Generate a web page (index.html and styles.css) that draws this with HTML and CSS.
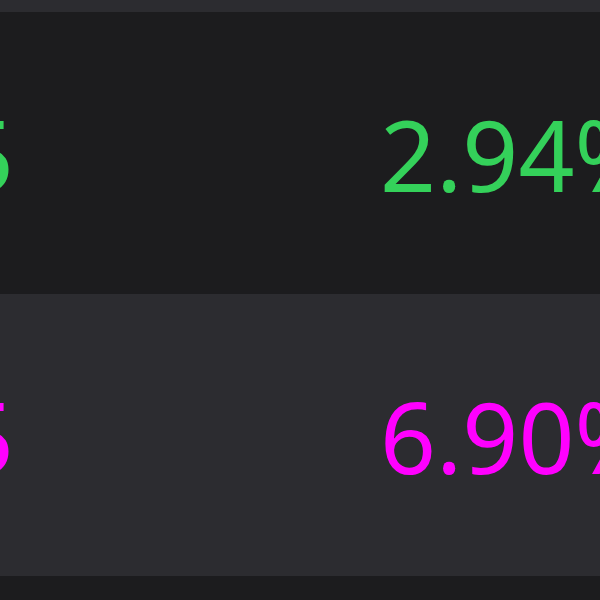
FILE: index.html
```html
<!DOCTYPE html>
<html>
<head>
<meta charset="utf-8">
<link rel="stylesheet" href="styles.css">
</head>
<body>
<div class="table">
  <div class="row alt top"></div>
  <div class="row">
    <div class="cell price up">0.0365</div>
    <div class="cell change up">2.94%</div>
  </div>
  <div class="row alt">
    <div class="cell price down">0.1545</div>
    <div class="cell change down">6.90%</div>
  </div>
  <div class="row"></div>
</div>
</body>
</html>
```
FILE: styles.css
```css
html, body {
  margin: 0;
  padding: 0;
  background: #1c1c1e;
  overflow: hidden;
}
.table {
  width: 600px;
  height: 600px;
  overflow: hidden;
  display: flex;
  flex-direction: column;
  font-family: "Noto Sans", "Open Sans", sans-serif;
}
.row {
  flex: 0 0 282px;
  display: grid;
  grid-template-columns: 14px 1fr;
  column-gap: 366px;
  align-items: center;
  background: #1c1c1e;
  font-size: 98px;
  line-height: 1;
}
.row.alt {
  background: #2c2c30;
}
.row.top {
  flex: 0 0 12px;
}
.cell {
  white-space: nowrap;
  padding-top: 2px;
}
.price {
  display: flex;
  justify-content: flex-end;
}
.up { color: #34d15a; }
.down { color: #ff00ff; }
```
